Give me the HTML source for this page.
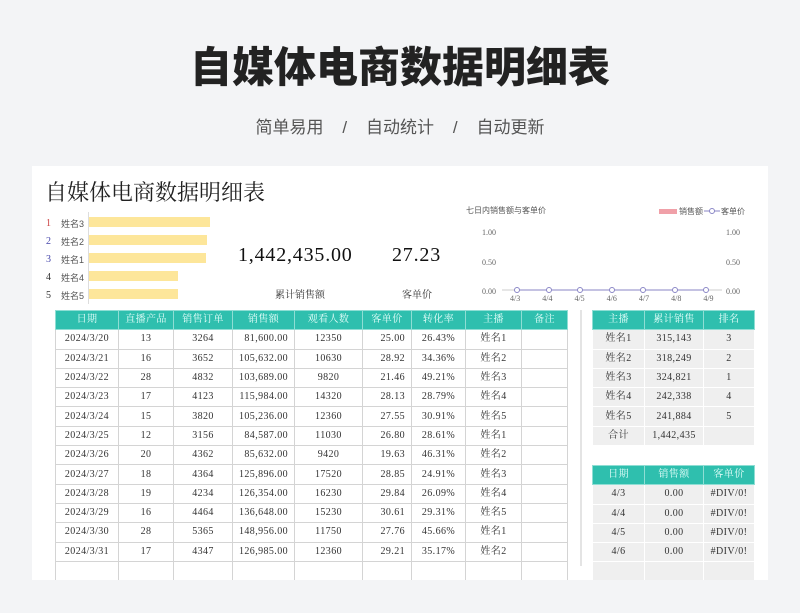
<!DOCTYPE html>
<html><head><meta charset="utf-8"><style>
*{margin:0;padding:0;box-sizing:border-box}
body{width:800px;height:613px;background:#f3f4f6;font-family:"Liberation Sans","Noto Sans CJK SC",sans-serif;position:relative;overflow:hidden}
.t{position:absolute;left:0;width:800px;text-align:center;top:34px;font-size:42px;font-weight:900;color:#222}
.s{position:absolute;left:0;width:800px;text-align:center;top:113px;font-size:17px;color:#555}
.card{position:absolute;left:32px;top:166px;width:736px;height:414px;background:#fff;overflow:hidden}
.ab{position:absolute}
.serif{font-family:"Liberation Serif","Noto Serif CJK SC",serif}
table{border-collapse:collapse;position:absolute;font-family:"Liberation Serif","Noto Serif CJK SC",serif;font-size:10px;color:#333;letter-spacing:0.4px}
td,th{height:19.3px;line-height:12px;text-align:center;vertical-align:middle;padding:0;white-space:nowrap;overflow:hidden}
th{background:#2fbfae;color:#e8fffb;font-weight:normal;border:1px solid #8fded4}
#m td{border:1px solid #d4d4d4}
#m td.r{text-align:right;padding-right:6px}
.g td{background:#efefef;border:1px solid #fff}
</style></head><body>
<div class="t">自媒体电商数据明细表</div>
<div class="s">简单易用 &nbsp;&nbsp; / &nbsp;&nbsp; 自动统计 &nbsp;&nbsp; / &nbsp;&nbsp; 自动更新</div>
<div class="card">
<div class="ab serif" style="left:13px;top:10px;font-size:22px;color:#222">自媒体电商数据明细表</div>
<div class="ab" style="left:56px;top:46px;width:1px;height:92px;background:#ddd"></div>
<div class="ab serif" style="left:14px;top:49px;font-size:10px;line-height:18px;color:#333">
<div style="color:#c44">1</div><div style="color:#44a">2</div><div style="color:#44a">3</div><div>4</div><div>5</div></div>
<div class="ab" style="left:29px;top:49px;font-size:9px;line-height:18px;color:#555">姓名3<br>姓名2<br>姓名1<br>姓名4<br>姓名5</div>
<div class="ab" style="left:57px;top:51px;width:121px;height:10px;background:#fde69a"></div>
<div class="ab" style="left:57px;top:69px;width:118px;height:10px;background:#fde69a"></div>
<div class="ab" style="left:57px;top:87px;width:117px;height:10px;background:#fde69a"></div>
<div class="ab" style="left:57px;top:105px;width:89px;height:10px;background:#fde69a"></div>
<div class="ab" style="left:57px;top:123px;width:89px;height:10px;background:#fde69a"></div>
<div class="ab serif" style="left:206px;top:78px;font-size:20px;color:#111;letter-spacing:0.8px">1,442,435.00</div>
<div class="ab serif" style="left:360px;top:78px;font-size:20px;color:#111;letter-spacing:0.8px">27.23</div>
<div class="ab serif" style="left:243px;top:120px;font-size:10px;color:#333">累计销售额</div>
<div class="ab serif" style="left:370px;top:120px;font-size:10px;color:#333">客单价</div>
<div class="ab" style="left:434px;top:39px;font-size:8px;color:#555">七日内销售额与客单价</div>
<div class="ab" style="left:627px;top:43px;width:18px;height:5px;background:#f0a0a8"></div>
<div class="ab" style="left:647px;top:40px;font-size:8px;color:#555">销售额</div>
<svg class="ab" style="left:672px;top:41px" width="16" height="8"><line x1="0" y1="4" x2="16" y2="4" stroke="#8a86c6"/><circle cx="8" cy="4" r="2.5" fill="#fff" stroke="#8a86c6"/></svg>
<div class="ab" style="left:689px;top:40px;font-size:8px;color:#555">客单价</div>
<div class="ab serif" style="left:450px;top:52px;font-size:8px;color:#666;line-height:29.5px">1.00<br>0.50<br>0.00</div>
<div class="ab serif" style="left:694px;top:52px;font-size:8px;color:#666;line-height:29.5px">1.00<br>0.50<br>0.00</div>
<svg class="ab" style="left:468px;top:118px" width="224" height="20"><line x1="2" y1="6" x2="222" y2="6" stroke="#ccc"/><polyline points="17,6 49,6 80,6 112,6 143,6 175,6 206,6" fill="none" stroke="#8a86c6"/><g fill="#fff" stroke="#8a86c6"><circle cx="17" cy="6" r="2.5"/><circle cx="49" cy="6" r="2.5"/><circle cx="80" cy="6" r="2.5"/><circle cx="112" cy="6" r="2.5"/><circle cx="143" cy="6" r="2.5"/><circle cx="175" cy="6" r="2.5"/><circle cx="206" cy="6" r="2.5"/></g></svg>
<div class="ab serif" style="left:478px;top:128px;font-size:8px;color:#666;word-spacing:20px">4/3 4/4 4/5 4/6 4/7 4/8 4/9</div>
<table id="m" style="left:23px;top:144px;width:513px">
<tr><th style="width:63px">日期</th><th style="width:55px">直播产品</th><th style="width:59px">销售订单</th><th style="width:62px">销售额</th><th style="width:68px">观看人数</th><th style="width:49px">客单价</th><th style="width:54px">转化率</th><th style="width:56px">主播</th><th>备注</th></tr>
<tr><td>2024/3/20</td><td>13</td><td>3264</td><td class="r">81,600.00</td><td>12350</td><td class="r">25.00</td><td>26.43%</td><td>姓名1</td><td></td></tr>
<tr><td>2024/3/21</td><td>16</td><td>3652</td><td class="r">105,632.00</td><td>10630</td><td class="r">28.92</td><td>34.36%</td><td>姓名2</td><td></td></tr>
<tr><td>2024/3/22</td><td>28</td><td>4832</td><td class="r">103,689.00</td><td>9820</td><td class="r">21.46</td><td>49.21%</td><td>姓名3</td><td></td></tr>
<tr><td>2024/3/23</td><td>17</td><td>4123</td><td class="r">115,984.00</td><td>14320</td><td class="r">28.13</td><td>28.79%</td><td>姓名4</td><td></td></tr>
<tr><td>2024/3/24</td><td>15</td><td>3820</td><td class="r">105,236.00</td><td>12360</td><td class="r">27.55</td><td>30.91%</td><td>姓名5</td><td></td></tr>
<tr><td>2024/3/25</td><td>12</td><td>3156</td><td class="r">84,587.00</td><td>11030</td><td class="r">26.80</td><td>28.61%</td><td>姓名1</td><td></td></tr>
<tr><td>2024/3/26</td><td>20</td><td>4362</td><td class="r">85,632.00</td><td>9420</td><td class="r">19.63</td><td>46.31%</td><td>姓名2</td><td></td></tr>
<tr><td>2024/3/27</td><td>18</td><td>4364</td><td class="r">125,896.00</td><td>17520</td><td class="r">28.85</td><td>24.91%</td><td>姓名3</td><td></td></tr>
<tr><td>2024/3/28</td><td>19</td><td>4234</td><td class="r">126,354.00</td><td>16230</td><td class="r">29.84</td><td>26.09%</td><td>姓名4</td><td></td></tr>
<tr><td>2024/3/29</td><td>16</td><td>4464</td><td class="r">136,648.00</td><td>15230</td><td class="r">30.61</td><td>29.31%</td><td>姓名5</td><td></td></tr>
<tr><td>2024/3/30</td><td>28</td><td>5365</td><td class="r">148,956.00</td><td>11750</td><td class="r">27.76</td><td>45.66%</td><td>姓名1</td><td></td></tr>
<tr><td>2024/3/31</td><td>17</td><td>4347</td><td class="r">126,985.00</td><td>12360</td><td class="r">29.21</td><td>35.17%</td><td>姓名2</td><td></td></tr>
<tr><td>&nbsp;</td><td></td><td></td><td></td><td></td><td></td><td></td><td></td><td></td></tr>
</table>
<div class="ab" style="left:548px;top:144px;width:2px;height:256px;background:#e4e4e4"></div>
<table class="g" style="left:560px;top:144px;width:163px">
<tr><th style="width:52px">主播</th><th style="width:59px">累计销售</th><th>排名</th></tr>
<tr><td>姓名1</td><td>315,143</td><td>3</td></tr>
<tr><td>姓名2</td><td>318,249</td><td>2</td></tr>
<tr><td>姓名3</td><td>324,821</td><td>1</td></tr>
<tr><td>姓名4</td><td>242,338</td><td>4</td></tr>
<tr><td>姓名5</td><td>241,884</td><td>5</td></tr>
<tr><td>合计</td><td>1,442,435</td><td></td></tr>
</table>
<table class="g" style="left:560px;top:299px;width:163px">
<tr><th style="width:52px">日期</th><th style="width:59px">销售额</th><th>客单价</th></tr>
<tr><td>4/3</td><td>0.00</td><td>#DIV/0!</td></tr>
<tr><td>4/4</td><td>0.00</td><td>#DIV/0!</td></tr>
<tr><td>4/5</td><td>0.00</td><td>#DIV/0!</td></tr>
<tr><td>4/6</td><td>0.00</td><td>#DIV/0!</td></tr>
<tr><td>&nbsp;</td><td></td><td></td></tr>
</table>
</div>
</body></html>
